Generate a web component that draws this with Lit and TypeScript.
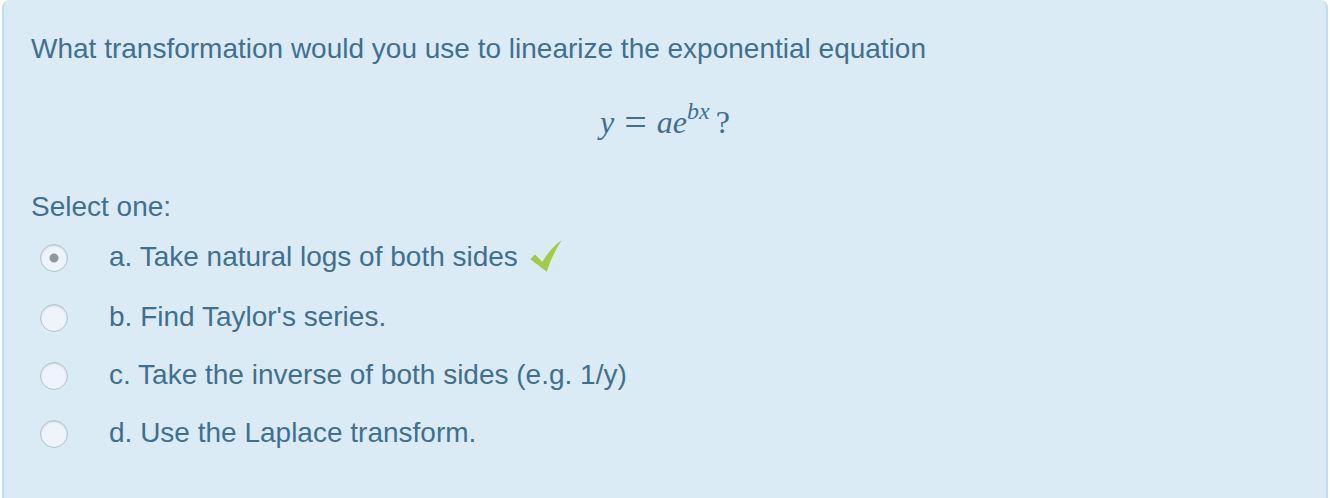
import { LitElement, html, css, svg } from "lit";
import { customElement, property, state } from "lit/decorators.js";

interface Choice {
  id: string;
  text: string;
  correct?: boolean;
}

const CHOICES: Choice[] = [
  { id: "a", text: "Take natural logs of both sides", correct: true },
  { id: "b", text: "Find Taylor's series." },
  { id: "c", text: "Take the inverse of both sides (e.g. 1/y)" },
  { id: "d", text: "Use the Laplace transform." },
];

const tick = svg`<path d="M0.3 20.3 L5 15.3 L12.3 23 Q20 9.5 31.7 1.3 Q22.5 15 16.7 32.7 Z" fill="#a3cb45"/>`;

@customElement("answer-option")
export class AnswerOption extends LitElement {
  @property({ attribute: false }) choice!: Choice;
  @property({ type: Boolean }) selected = false;

  static styles = css`
    :host {
      display: block;
    }
    .row {
      display: flex;
      align-items: center;
      gap: 41px;
      min-height: 34px;
    }
    .radio {
      appearance: none;
      box-sizing: border-box;
      flex: none;
      width: 28px;
      height: 28px;
      margin: 0;
      border: 1px solid #b4c3ce;
      border-radius: 50%;
      background: #edf4fc;
      box-shadow: inset 0 1px 2px #c6d1d9;
    }
    .radio:checked {
      background: radial-gradient(circle, #8e969f 4px, #edf4fc 5px);
    }
    .label {
      display: flex;
      align-items: center;
      gap: 12px;
    }
    .text {
      line-height: 32px;
      padding-bottom: 2px;
    }
    .tick {
      flex: none;
      width: 32px;
      height: 38px;
    }
  `;

  private pick() {
    this.dispatchEvent(new CustomEvent("pick", { detail: this.choice.id }));
  }

  render() {
    const { id, text, correct } = this.choice;
    return html`
      <div class="row">
        <input
          class="radio"
          type="radio"
          id=${id}
          name="answer"
          .checked=${this.selected}
          @change=${this.pick}
        />
        <label class="label" for=${id}>
          <span class="text">${id}. ${text}</span>
          ${correct
            ? html`<svg class="tick" viewBox="0 0 32 38" role="img" aria-label="Correct">${tick}</svg>`
            : null}
        </label>
      </div>
    `;
  }
}

@customElement("app-root")
export class AppRoot extends LitElement {
  @state() private chosen = "a";

  static styles = css`
    :host {
      display: block;
      font: 28px/34px "Liberation Sans", Arial, sans-serif;
      color: #41708f;
    }
    .question {
      box-sizing: border-box;
      min-height: 100vh;
      margin: 0 2px;
      padding: 32px 27px;
      border: solid #bfdfed;
      border-width: 0 2px;
      border-radius: 8px 8px 0 0;
      background: #dbebf6;
    }
    .prompt {
      margin: 0;
    }
    .formula {
      margin: 34px 0 46px;
      font: 32px/44px "Liberation Serif", "Times New Roman", serif;
      text-align: center;
    }
    .equals {
      margin: 0 10px;
      font-size: 40px;
      line-height: 0;
      vertical-align: -3px;
    }
    .power {
      font-size: 24px;
      line-height: 0;
      vertical-align: 14px;
      margin-right: 6px;
    }
    .answers {
      margin: 0;
      padding: 0;
      border: 0;
    }
    .legend {
      padding: 0;
    }
    .options {
      display: flex;
      flex-direction: column;
      gap: 24px;
      padding: 15px 9px 0;
    }
  `;

  render() {
    return html`
      <main class="question">
        <p class="prompt">What transformation would you use to linearize the exponential equation</p>
        <div class="formula"><i>y</i><span class="equals">=</span><i>ae</i><sup class="power"><i>bx</i></sup>?</div>
        <fieldset class="answers">
          <legend class="legend">Select one:</legend>
          <div class="options">
            ${CHOICES.map(
              (c) => html`<answer-option
                .choice=${c}
                .selected=${this.chosen === c.id}
                @pick=${(e: CustomEvent<string>) => (this.chosen = e.detail)}
              ></answer-option>`,
            )}
          </div>
        </fieldset>
      </main>
    `;
  }
}
